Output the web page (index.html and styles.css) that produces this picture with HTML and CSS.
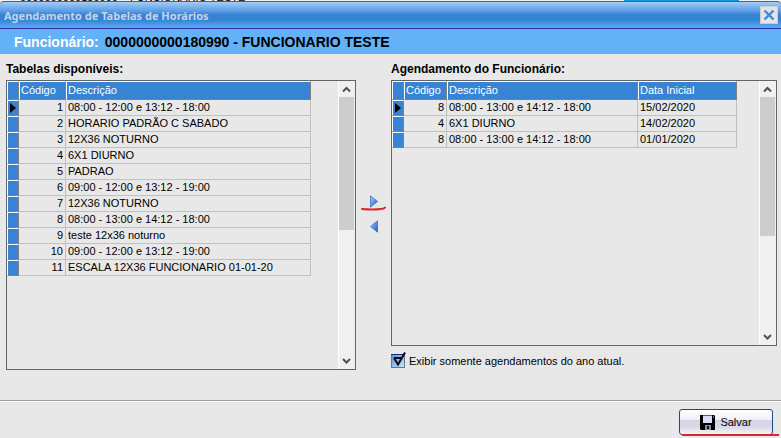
FILE: index.html
```
<!DOCTYPE html>
<html lang="pt-BR">

<head>
  <meta charset="UTF-8">
  <meta name="viewport" content="width=device-width, initial-scale=1.0">
  <title>Agendamento de Tabelas de Horários</title>
  <link rel="stylesheet" href="styles.css">
</head>

<body>
  <div class="behind">
    <span class="behind-code">0000000000180990</span>
    <span class="behind-name">FUNCIONARIO TESTE</span>
    <span class="behind-selected"></span>
  </div>
  <div class="window">
    <header class="titlebar">
      <h1>Agendamento de Tabelas de Horários</h1>
      <button class="close" type="button" aria-label="Fechar">
        <svg width="12" height="12" viewBox="0 0 12 12">
          <path d="M1.5 1.5L10.5 10.5M10.5 1.5L1.5 10.5" stroke="#3c8ad8" stroke-width="2.4" />
        </svg>
      </button>
    </header>
    <div class="employee">
      <span class="employee-label">Funcionário:</span>
      <span>0000000000180990 - FUNCIONARIO TESTE</span>
    </div>

    <main class="content">
      <section class="panel panel-left">
        <h2>Tabelas disponíveis:</h2>
        <div class="grid-box">
          <div class="grid-area">
            <table class="grid">
              <thead>
                <tr><th class="mark"></th><th class="code">Código</th><th>Descrição</th></tr>
              </thead>
              <tbody>
                <tr class="current"><td class="mark"></td><td class="code">1</td><td>08:00 - 12:00 e 13:12 - 18:00</td></tr>
                <tr><td class="mark"></td><td class="code">2</td><td>HORARIO PADRÃO C SABADO</td></tr>
                <tr><td class="mark"></td><td class="code">3</td><td>12X36 NOTURNO</td></tr>
                <tr><td class="mark"></td><td class="code">4</td><td>6X1 DIURNO</td></tr>
                <tr><td class="mark"></td><td class="code">5</td><td>PADRAO</td></tr>
                <tr><td class="mark"></td><td class="code">6</td><td>09:00 - 12:00 e 13:12 - 19:00</td></tr>
                <tr><td class="mark"></td><td class="code">7</td><td>12X36 NOTURNO</td></tr>
                <tr><td class="mark"></td><td class="code">8</td><td>08:00 - 13:00 e 14:12 - 18:00</td></tr>
                <tr><td class="mark"></td><td class="code">9</td><td>teste 12x36 noturno</td></tr>
                <tr><td class="mark"></td><td class="code">10</td><td>09:00 - 12:00 e 13:12 - 19:00</td></tr>
                <tr><td class="mark"></td><td class="code">11</td><td>ESCALA 12X36 FUNCIONARIO 01-01-20</td></tr>
              </tbody>
            </table>
          </div>
          <div class="scrollbar">
            <svg width="16" height="16" viewBox="0 0 16 16"><path d="M4 10.5L7.5 7L11 10.5" /></svg>
            <div class="track"><div class="thumb"></div></div>
            <svg width="16" height="16" viewBox="0 0 16 16"><path d="M4 6L7.5 9.5L11 6" /></svg>
          </div>
        </div>
      </section>

      <div class="transfer">
        <button type="button" aria-label="Adicionar">
          <svg width="8" height="13" viewBox="0 0 8 13">
            <defs>
              <linearGradient id="blue" x1="0" y1="0" x2="1" y2="1">
                <stop offset="0" stop-color="#b4d4f8" />
                <stop offset="1" stop-color="#1450c0" />
              </linearGradient>
            </defs>
            <path d="M.5 .8V12.2L7.5 6.5Z" fill="url(#blue)" stroke="#3474d4" stroke-width=".8" />
          </svg>
          <svg class="underline" width="26" height="5" viewBox="0 0 26 5">
            <path d="M1 3Q12 4 20 3Q23 3 24 1.5" fill="none" stroke="#e02430" stroke-width="2" stroke-linecap="round" />
          </svg>
        </button>
        <button type="button" aria-label="Remover">
          <svg width="8" height="13" viewBox="0 0 8 13">
            <path d="M7.5 .8V12.2L.5 6.5Z" fill="url(#blue)" stroke="#3474d4" stroke-width=".8" />
          </svg>
        </button>
      </div>

      <section class="panel panel-right">
        <h2>Agendamento do Funcionário:</h2>
        <div class="grid-box">
          <div class="grid-area">
            <table class="grid">
              <thead>
                <tr><th class="mark"></th><th class="code">Código</th><th>Descrição</th><th class="date">Data Inicial</th></tr>
              </thead>
              <tbody>
                <tr class="current"><td class="mark"></td><td class="code">8</td><td>08:00 - 13:00 e 14:12 - 18:00</td><td>15/02/2020</td></tr>
                <tr><td class="mark"></td><td class="code">4</td><td>6X1 DIURNO</td><td>14/02/2020</td></tr>
                <tr><td class="mark"></td><td class="code">8</td><td>08:00 - 13:00 e 14:12 - 18:00</td><td>01/01/2020</td></tr>
              </tbody>
            </table>
          </div>
          <div class="scrollbar">
            <svg width="16" height="16" viewBox="0 0 16 16"><path d="M4 10.5L7.5 7L11 10.5" /></svg>
            <div class="track"><div class="thumb"></div></div>
            <svg width="16" height="16" viewBox="0 0 16 16"><path d="M4 6L7.5 9.5L11 6" /></svg>
          </div>
        </div>
        <label class="filter">
          <input type="checkbox" checked>
          <svg class="box" width="15" height="17" viewBox="0 0 15 17">
            <defs>
              <linearGradient id="check" x1="0" y1="0" x2="1" y2="1">
                <stop offset="0" stop-color="#4c90e0" />
                <stop offset="1" stop-color="#d0ecff" />
              </linearGradient>
            </defs>
            <rect x=".5" y="2.5" width="13" height="13" fill="url(#check)" stroke="#6c7484" />
            <path d="M0 2.5H14" stroke="#1c2c80" />
            <path class="tick" d="M3 6H10M3 6L7 12.5L14 .5" fill="none" stroke="#0a0a14" stroke-width="2" />
          </svg>
          Exibir somente agendamentos do ano atual.
        </label>
      </section>
    </main>

    <footer class="actions">
      <button type="button" class="save">
        <svg width="15" height="15" viewBox="0 0 15 15">
          <path d="M0 0H14L15 1V15H1L0 14Z" fill="#000" />
          <path d="M3 1H12V8H3Z" fill="#dcdcff" />
          <path d="M3 0H12V1H3Z" fill="#e02430" />
          <path d="M5 10H11V15H5Z" fill="#8c8c8c" />
          <path d="M7 11H9V14H7Z" fill="#111" />
          <path d="M13 1H14V3H13Z" fill="#777" />
        </svg>
        Salvar
      </button>
    </footer>
  </div>
</body>

</html>
```
FILE: styles.css
```
* {
  margin: 0;
  padding: 0;
  box-sizing: border-box;
}

body {
  display: flex;
  flex-direction: column;
  height: 100vh;
  font-family: "Liberation Sans", Arial, sans-serif;
  font-size: 11px;
  color: #000;
  background: #e8e8e8;
}

button {
  font: inherit;
  border: none;
  background: none;
}

.behind {
  display: flex;
  align-items: flex-end;
  height: 1px;
  overflow: hidden;
  line-height: 8px;
  background: #f4f4f4;
}

.behind-code {
  padding-left: 20px;
  width: 130px;
}

.behind-name {
  flex: 1;
}

.behind-selected {
  width: 115px;
  height: 1px;
  margin-right: 42px;
  background: #109ad8;
}

.window {
  flex: 1;
  display: flex;
  flex-direction: column;
  min-height: 0;
}

.titlebar {
  display: flex;
  align-items: center;
  justify-content: space-between;
  height: 28px;
  padding: 0 3px 0 4px;
  border-top: 1px solid #4c6478;
  border-bottom: 1px solid #2c2ca0;
  border-radius: 4px 4px 0 0;
  background: linear-gradient(#a8ccf4 0, #80b8f0 15%, #5c9ce4 35%, #3482d4 50%, #3482d4 68%, #5cacf4 100%);
}

.titlebar h1 {
  font-family: "Noto Sans", sans-serif;
  font-size: 11px;
  font-weight: bold;
  color: #c4d4e8;
}

.close {
  display: flex;
  align-items: center;
  justify-content: center;
  width: 18px;
  height: 18px;
  border: 1px solid #c8ccd4;
  background: #e4e4e8;
}

.employee {
  display: flex;
  align-items: center;
  gap: 6px;
  height: 25px;
  padding: 0 14px;
  font-size: 14px;
  font-weight: bold;
  background: #63b1f7;
}

.employee-label {
  color: #fff;
}

.content {
  flex: 1;
  display: flex;
  min-height: 0;
  padding: 6px 4px 30px 6px;
}

.panel {
  display: flex;
  flex-direction: column;
  min-width: 0;
}

.panel-left {
  flex: 350 1 0;
}

.panel-right {
  flex: 386 1 0;
}

.panel h2 {
  height: 20px;
  font-size: 12px;
  line-height: 18px;
}

.grid-box {
  flex: 1;
  display: flex;
  min-height: 0;
  border: 1px solid #646464;
}

.grid-area {
  flex: 1;
  padding-right: 27px;
  border-right: 1px solid #fff;
}

.panel-right .grid-area {
  padding-right: 22px;
}

.grid {
  width: 100%;
  table-layout: fixed;
  border-collapse: separate;
  border-spacing: 0;
}

.grid th,
.grid td {
  height: 16px;
  padding: 0 2px;
  line-height: 15px;
  text-align: left;
  white-space: nowrap;
  overflow: hidden;
  border-right: 1px solid #c0c0c0;
  border-bottom: 1px solid #c0c0c0;
}

.grid th {
  height: 19px;
  font-weight: normal;
  color: #fff;
  background: #3684d3;
  border-color: #808080;
  border-top: 1px solid #fff;
  border-left: 1px solid #fff;
  padding: 0 1px;
}

.grid .mark {
  width: 12px;
  padding: 0;
  background: #3684d3;
  border-right: 1px solid #808080;
  border-bottom: 1px solid #808080;
  border-top: 1px solid #fff;
  border-left: 1px solid #fff;
}

.grid .code {
  width: 47px;
}

.panel-right .grid .code {
  width: 43px;
}

.grid td.code {
  text-align: right;
}

.grid .date {
  width: 99px;
}

.current .mark::before {
  content: "";
  display: block;
  width: 0;
  margin-left: 2px;
  border-left: 6px solid #000;
  border-top: 5px solid transparent;
  border-bottom: 5px solid transparent;
}

.scrollbar {
  display: flex;
  flex-direction: column;
  width: 16px;
  background: #f0f0f0;
}

.scrollbar path {
  fill: none;
  stroke: #505050;
  stroke-width: 2;
}

.track {
  flex: 1;
}

.thumb {
  height: 52%;
  margin-right: 1px;
  background: #cdcdcd;
}

.panel-right .thumb {
  height: 60%;
}

.transfer {
  display: flex;
  flex-direction: column;
  align-items: center;
  gap: 12px;
  width: 35px;
  padding-top: 135px;
}

.transfer button {
  position: relative;
  display: flex;
}

.underline {
  position: absolute;
  left: -9px;
  top: 11px;
}

.filter {
  position: relative;
  display: flex;
  align-items: center;
  gap: 3px;
  height: 24px;
  padding-top: 5px;
}

.filter input {
  position: absolute;
  width: 15px;
  height: 17px;
  opacity: 0;
}

.filter input:not(:checked) + .box .tick {
  display: none;
}

.actions {
  display: flex;
  justify-content: flex-end;
  height: 38px;
  padding: 8px 8px 3px;
  border-top: 1px solid #a0a0a0;
  box-shadow: inset 0 1px #fff;
}

.save {
  position: relative;
  display: flex;
  align-items: center;
  justify-content: center;
  gap: 5px;
  width: 94px;
  height: 26px;
  border: 1px solid #1c4c84;
  border-radius: 3px;
  background: linear-gradient(#fff 0, #f0f0f8 40%, #d4d4e4 41%, #d8d8e8 70%, #f4f4fa 100%);
}

/* red stroke under the button */
.save::after {
  content: "";
  position: absolute;
  left: 2px;
  right: -7px;
  bottom: -2px;
  height: 2px;
  background: #e02428;
}
```
